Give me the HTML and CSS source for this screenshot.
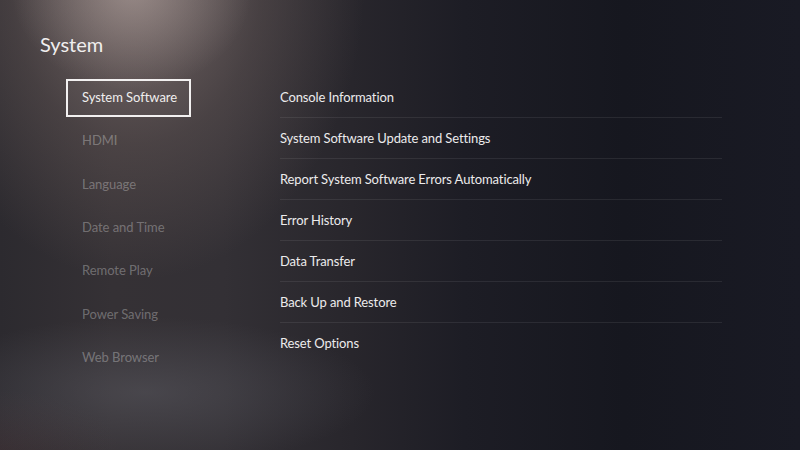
FILE: index.html
```html
<!DOCTYPE html>
<html lang="en">
<head>
<meta charset="utf-8">
<title>System</title>
<link rel="stylesheet" href="styles.css">
</head>
<body>
<div class="screen">
  <h1 class="title">System</h1>
  <div class="content">
    <nav class="side">
      <div class="side-item selected">System Software</div>
      <div class="side-item">HDMI</div>
      <div class="side-item">Language</div>
      <div class="side-item">Date and Time</div>
      <div class="side-item">Remote Play</div>
      <div class="side-item">Power Saving</div>
      <div class="side-item">Web Browser</div>
    </nav>
    <ul class="list">
      <li class="row">Console Information</li>
      <li class="row">System Software Update and Settings</li>
      <li class="row">Report System Software Errors Automatically</li>
      <li class="row">Error History</li>
      <li class="row">Data Transfer</li>
      <li class="row">Back Up and Restore</li>
      <li class="row">Reset Options</li>
    </ul>
  </div>
</div>
</body>
</html>
```

FILE: styles.css
```css
html, body {
  margin: 0;
  padding: 0;
  background: #16171f;
}

.screen {
  width: 800px;
  height: 450px;
  overflow: hidden;
  font-family: Lato, "Open Sans", sans-serif;
  color: #ecebec;
  background:
    radial-gradient(ellipse 120px 100px at 132px -10px, rgba(200,185,180,0.42), rgba(200,185,180,0) 100%),
    radial-gradient(ellipse 230px 300px at 135px -20px, rgba(155,136,132,0.62), rgba(125,108,104,0.3) 55%, rgba(120,105,100,0) 100%),
    radial-gradient(ellipse 230px 75px at 145px 392px, rgba(100,100,108,0.42), rgba(100,100,108,0) 100%),
    radial-gradient(ellipse 120px 60px at 0px 450px, rgba(90,62,64,0.28), rgba(90,62,64,0) 100%),
    linear-gradient(90deg, #2c2a2f 0%, #353135 14%, #333035 28%, #28262c 44%, #1d1d25 58%, #16171f 78%, #191a24 100%);
}

.title {
  margin: 0;
  padding: 31px 0 0 40px;
  font-size: 20px;
  font-weight: 400;
  line-height: 26px;
  color: #f0eeee;
}

.content {
  display: flex;
  padding-top: 22px;
}

.side {
  margin-left: 66px;
  width: 125px;
  display: flex;
  flex-direction: column;
  gap: 5.35px;
}

.side-item {
  box-sizing: border-box;
  height: 38px;
  padding-left: 16px;
  padding-bottom: 2px;
  display: flex;
  align-items: center;
  font-size: 13px;
  letter-spacing: -0.05px;
  color: rgba(255,255,255,0.3);
  white-space: nowrap;
}

.side-item.selected {
  border: 2px solid #f2f0f0;
  padding-left: 14px;
  color: #f0eeee;
  background: rgba(255,255,255,0.03);
}

.list {
  list-style: none;
  margin: -2px 0 0 89px;
  padding: 0;
  width: 442px;
}

.row {
  height: 40px;
  display: flex;
  align-items: center;
  font-size: 13px;
  letter-spacing: -0.12px;
  color: #ecebec;
  border-bottom: 1px solid rgba(255,255,255,0.08);
  white-space: nowrap;
}

.row:last-child {
  border-bottom: none;
}
```
